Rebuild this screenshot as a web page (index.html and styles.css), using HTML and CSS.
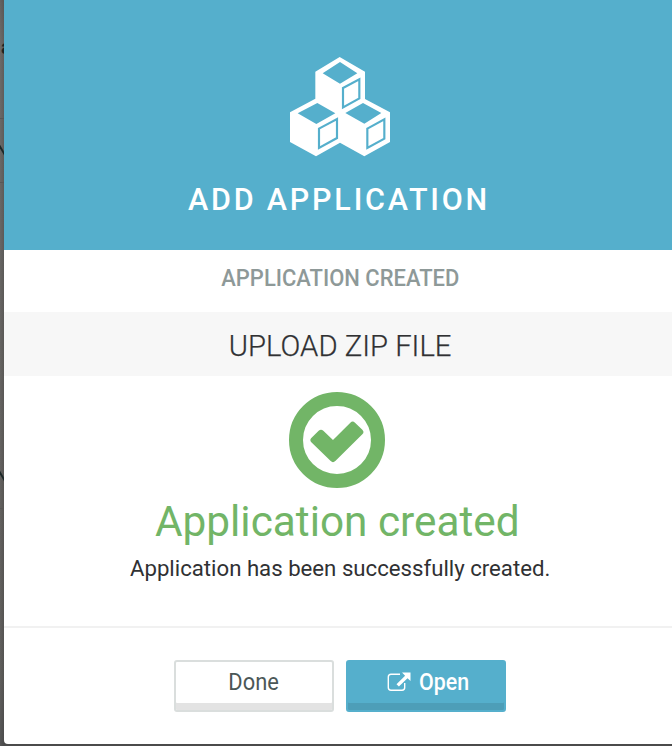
FILE: index.html
```html
<!DOCTYPE html>
<html lang="en">
<head>
<meta charset="utf-8">
<title>Add Application</title>
<link rel="stylesheet" href="styles.css">
</head>
<body>
<div class="backdrop">
  <span class="behind behind-label">a</span>
  <span class="behind-rule rule-one"></span>
  <svg class="behind-stroke stroke-one" viewBox="0 0 4 11" aria-hidden="true"><path d="M-1 0L5 10"/></svg>
  <span class="behind-rule rule-two"></span>
  <svg class="behind-stroke stroke-two" viewBox="0 0 4 11" aria-hidden="true"><path d="M-1 0L5 10"/></svg>
  <span class="behind-rule rule-three"></span>
</div>
<main class="modal">
  <header class="modal-header">
    <svg class="cubes" viewBox="60 51 300 300" aria-hidden="true">
      <path fill="#fff" d="M209 51l76 44v82l75 40v89l-77 43-73-41-72 41-78-43v-89l76-41V95z"/>
      <path fill="#55afcc" d="M210 66l52 34-52 31-52-31zM142 189l54 31-57 32-56-32zM279 189l55 30-51 32-57-32z"/>
      <g fill="none" stroke="#55afcc" stroke-width="6.5">
        <path d="M219 144l49-26v57l-49 27z"/>
        <path d="M147 266l54-29v57l-54 30z"/>
        <path d="M292 266l51-28v58l-51 28z"/>
      </g>
    </svg>
    <h1 class="title"><span>ADD APPLICATION</span></h1>
  </header>
  <div class="status"><span>APPLICATION CREATED</span></div>
  <div class="section"><span>UPLOAD ZIP FILE</span></div>
  <section class="result">
    <svg class="check" viewBox="58 36 288 288" aria-hidden="true">
      <circle cx="202" cy="180" r="123" fill="none" stroke="#72b567" stroke-width="42"/>
      <path fill="#72b567" d="M125 174L147 152Q154 146 161 152L190 180L242 128Q249 121 256 128L278 149Q285 156 278 163L197 243Q190 250 183 243L125 187Q119 180 125 174z"/>
    </svg>
    <h2 class="result-title"><span>Application created</span></h2>
    <p class="result-text"><span>Application has been successfully created.</span></p>
  </section>
  <footer class="actions">
    <button class="button button-done"><span class="done-label">Done</span></button>
    <button class="button button-open">
      <svg class="external" viewBox="0 0 24 20" aria-hidden="true">
        <path fill="none" stroke="#fff" stroke-width="1.4" d="M13 2.3H4Q1.3 2.3 1.3 5v10.5q0 2.7 2.7 2.7h11q2.7 0 2.7-2.7V11"/>
        <path fill="#fff" d="M15 .5h8.5V9l-3-2.8-8.6 8.4-2.4-2.3 8.6-8.6z"/>
      </svg>
      <span class="open-label">Open</span>
    </button>
  </footer>
</main>
</body>
</html>
```
FILE: styles.css
```css
* { box-sizing: border-box; }
body {
  margin: 0;
  height: 746px;
  overflow: hidden;
  background: #4b4b4b;
  font-family: Roboto, "Liberation Sans", sans-serif;
  color: #303133;
}
.backdrop {
  position: absolute;
  left: 0;
  top: 0;
  width: 4px;
  height: 746px;
  overflow: hidden;
  background: linear-gradient(to right, rgba(0, 0, 0, 0), rgba(0, 0, 0, .13)), linear-gradient(#656361, #6d6b69 40px, #696765 230px, #646260 500px, #605f5d 680px, #555 746px);
}
.behind-label { position: absolute; left: 1px; top: 37px; color: #1c2424; font-size: 20px; font-weight: 700; line-height: 20px; }
.behind-stroke { position: absolute; left: 0; width: 4px; height: 11px; fill: none; stroke: #1c2828; stroke-width: 2; }
.stroke-one { top: 145px; }
.stroke-two { top: 471px; }
.behind-rule { position: absolute; left: 0; width: 4px; height: 1px; background: #595755; }
.rule-one { top: 118px; }
.rule-two { top: 182px; }
.rule-three { top: 508px; }
.modal {
  position: relative;
  width: 672px;
  height: 744px;
  margin-left: 4px;
  background: #fff;
  border-radius: 0 0 4px 4px;
  overflow: hidden;
  text-align: center;
  white-space: nowrap;
}
.modal span { display: inline-block; }
.modal-header { height: 250px; padding-top: 57px; background: #55afcc; }
.cubes { display: block; width: 100px; height: 100px; margin: 0 auto; }
.title {
  margin: 25px 0 0;
  padding-right: 2px;
  font-size: 30.5px;
  font-weight: 500;
  line-height: 36px;
  letter-spacing: 2.8px;
  color: #fff;
}
.status {
  height: 62px;
  font-size: 23.5px;
  line-height: 56px;
  font-weight: 500;
  color: #8e9998;
}
.status span { transform: scaleX(.935); }
.section {
  height: 64px;
  background: #f7f7f7;
  font-size: 30px;
  font-weight: 300;
  line-height: 68px;
  -webkit-text-stroke: .25px #303133;
}
.section span { transform: scaleX(.975); }
.result { height: 250px; padding-top: 16px; }
.check { display: block; width: 96px; height: 96px; margin-left: 285px; }
.result-title { margin: 8px 6px 0 0; font-size: 43px; font-weight: 400; line-height: 50px; color: #72b567; }
.result-title span { transform: scaleX(.984); }
.result-text { margin: 8px 0 0; font-size: 22.5px; line-height: 28px; }
.result-text span { transform: scaleX(.986); }
.actions {
  display: flex;
  justify-content: center;
  gap: 12px;
  height: 118px;
  padding-top: 32px;
  border-top: 2px solid #f1f1f1;
}
.button {
  display: flex;
  align-items: center;
  justify-content: center;
  width: 160px;
  height: 52px;
  padding: 0 0 7px;
  border: 2px solid #dadedd;
  border-radius: 3px;
  background: #fff;
  box-shadow: inset 0 -7px #e3e3e3;
  color: #4b5757;
  font: 400 23px/28px Roboto, "Liberation Sans", sans-serif;
}
.button-done { padding-right: 1px; }
.done-label { transform: scaleX(.95); }
.button-open {
  gap: 8px;
  padding-left: 4px;
  border-color: #55afcc;
  background: #55afcc;
  box-shadow: inset 0 -7px #4d9eb8;
  color: #fff;
  font-weight: 500;
}
.external { width: 24px; height: 20px; margin: -2px 0 0; }
.open-label { margin-right: -4px; transform: scaleX(.93); transform-origin: left; }
```
